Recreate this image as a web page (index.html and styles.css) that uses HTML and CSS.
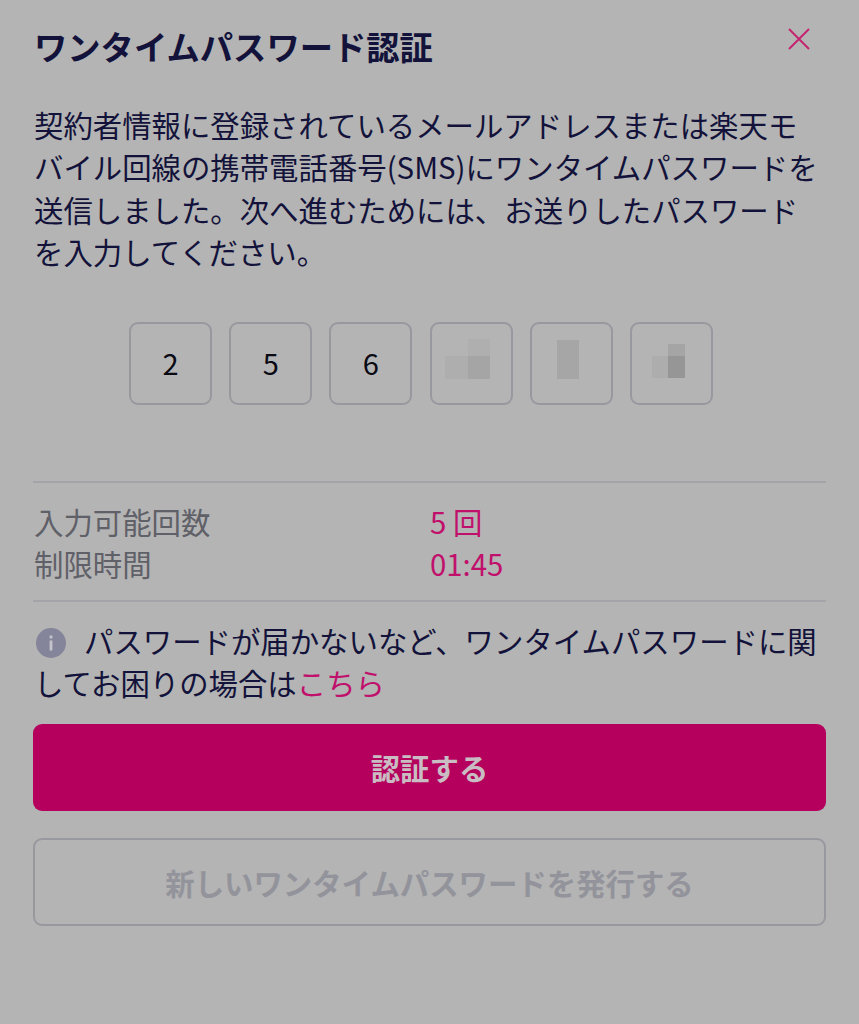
FILE: index.html
```html
<!DOCTYPE html>
<html lang="ja">
<head>
    <meta charset="UTF-8">
    <title>ワンタイムパスワード認証</title>
    <link rel="stylesheet" href="styles.css">
</head>
<body>
<div id="modal">
    <div class="head">
        <h1 class="title">ワンタイムパスワード認証</h1>
        <svg class="close" width="24" height="24" viewBox="0 0 24 24">
            <path d="M2 2L22 22M22 2L2 22" stroke="#c4246f" stroke-width="2" fill="none"/>
        </svg>
    </div>
    <p class="lead">契約者情報に登録されているメールアドレスまたは楽天モ<br>バイル回線の携帯電話番号(SMS)にワンタイムパスワードを<br>送信しました。次へ進むためには、お送りしたパスワード<br>を入力してください。</p>
    <div class="codes">
        <div class="code">2</div>
        <div class="code">5</div>
        <div class="code">6</div>
        <div class="code">
            <span class="blur b4a"></span>
            <span class="blur b4b"></span>
            <span class="blur b4c"></span>
        </div>
        <div class="code">
            <span class="blur b5a"></span>
        </div>
        <div class="code">
            <span class="blur b6a"></span>
            <span class="blur b6b"></span>
            <span class="blur b6c"></span>
        </div>
    </div>
    <div class="status">
        <div class="row"><span class="label">入力可能回数</span><span class="value">5 回</span></div>
        <div class="row"><span class="label">制限時間</span><span class="value">01:45</span></div>
    </div>
    <p class="help"><svg class="info" width="30" height="30" viewBox="0 0 30 30">
        <circle cx="15" cy="15" r="15" fill="#84849a"/>
        <rect x="13.6" y="12.5" width="2.8" height="10" fill="#c4c4cc"/>
        <rect x="13.6" y="7.5" width="2.8" height="3" fill="#c4c4cc"/>
    </svg>パスワードが届かないなど、ワンタイムパスワードに関<br>してお困りの場合は<a href="#" class="link">こちら</a></p>
    <button class="btn primary">認証する</button>
    <button class="btn secondary">新しいワンタイムパスワードを発行する</button>
</div>
</body>
</html>
```

FILE: styles.css
```css
html, body {
    margin: 0;
    padding: 0;
}

body {
    background-color: #b4b4b4;
    color: #12123a;
    font-family: "Noto Sans CJK JP", "Noto Sans", sans-serif;
}

#modal {
    padding: 0 33px;
    height: 1024px;
    box-sizing: border-box;
}

.head {
    display: flex;
    justify-content: space-between;
    padding: 22px 0 0 1px;
}

.title {
    margin: 0;
    font-size: 33.3px;
    line-height: 48px;
    font-weight: 700;
}

.close {
    margin: 5px 15px 0 0;
}

.lead {
    margin: 33px 0 0 1px;
    font-size: 29.4px;
    line-height: 42.4px;
    white-space: nowrap;
}

.codes {
    display: flex;
    justify-content: flex-start;
    gap: 17.2px;
    margin-top: 49px;
    padding-left: 96px;
}

.code {
    position: relative;
    width: 83px;
    height: 83px;
    box-sizing: border-box;
    border: 2px solid #98989f;
    border-radius: 9px;
    padding-bottom: 3px;
    display: flex;
    align-items: center;
    justify-content: center;
    color: #0a0a14;
    font-size: 29px;
}

.blur {
    position: absolute;
}

.b4a { left: 13px; top: 32px; width: 23px; height: 23px; background-color: #aeaeae; }
.b4b { left: 36px; top: 15px; width: 22px; height: 17px; background-color: #afafaf; }
.b4c { left: 36px; top: 32px; width: 22px; height: 23px; background-color: #a5a5a5; }
.b5a { left: 25px; top: 16px; width: 22px; height: 39px; background-color: #a6a6a6; }
.b6a { left: 20px; top: 32px; width: 16px; height: 22px; background-color: #adadad; }
.b6b { left: 36px; top: 20px; width: 17px; height: 12px; background-color: #a5a5a5; }
.b6c { left: 36px; top: 32px; width: 17px; height: 22px; background-color: #969696; }

.status {
    margin-top: 76px;
    border-top: 2px solid #a4a4a8;
    border-bottom: 2px solid #a4a4a8;
    padding: 17px 0 16px 1px;
}

.row {
    display: flex;
    font-size: 29.4px;
    line-height: 42px;
}

.label {
    width: 396px;
    color: #606068;
}

.value {
    color: #c0106c;
}

.help {
    margin: 17px 0 0 1px;
    font-size: 29.4px;
    line-height: 42px;
    white-space: nowrap;
}

.info {
    vertical-align: -5px;
    margin: 0 18px 0 2px;
}

.link {
    color: #c0106c;
    text-decoration: none;
}

.btn {
    display: block;
    width: 100%;
    height: 88px;
    box-sizing: border-box;
    border-radius: 9px;
    font-family: inherit;
    font-size: 29.4px;
    font-weight: 700;
}

.primary {
    margin-top: 21px;
    height: 87px;
    border: none;
    background-color: #b5005e;
    color: #c9bcc2;
}

.secondary {
    margin-top: 27px;
    border: 2px solid #98989f;
    background-color: transparent;
    color: #93939b;
}
```
